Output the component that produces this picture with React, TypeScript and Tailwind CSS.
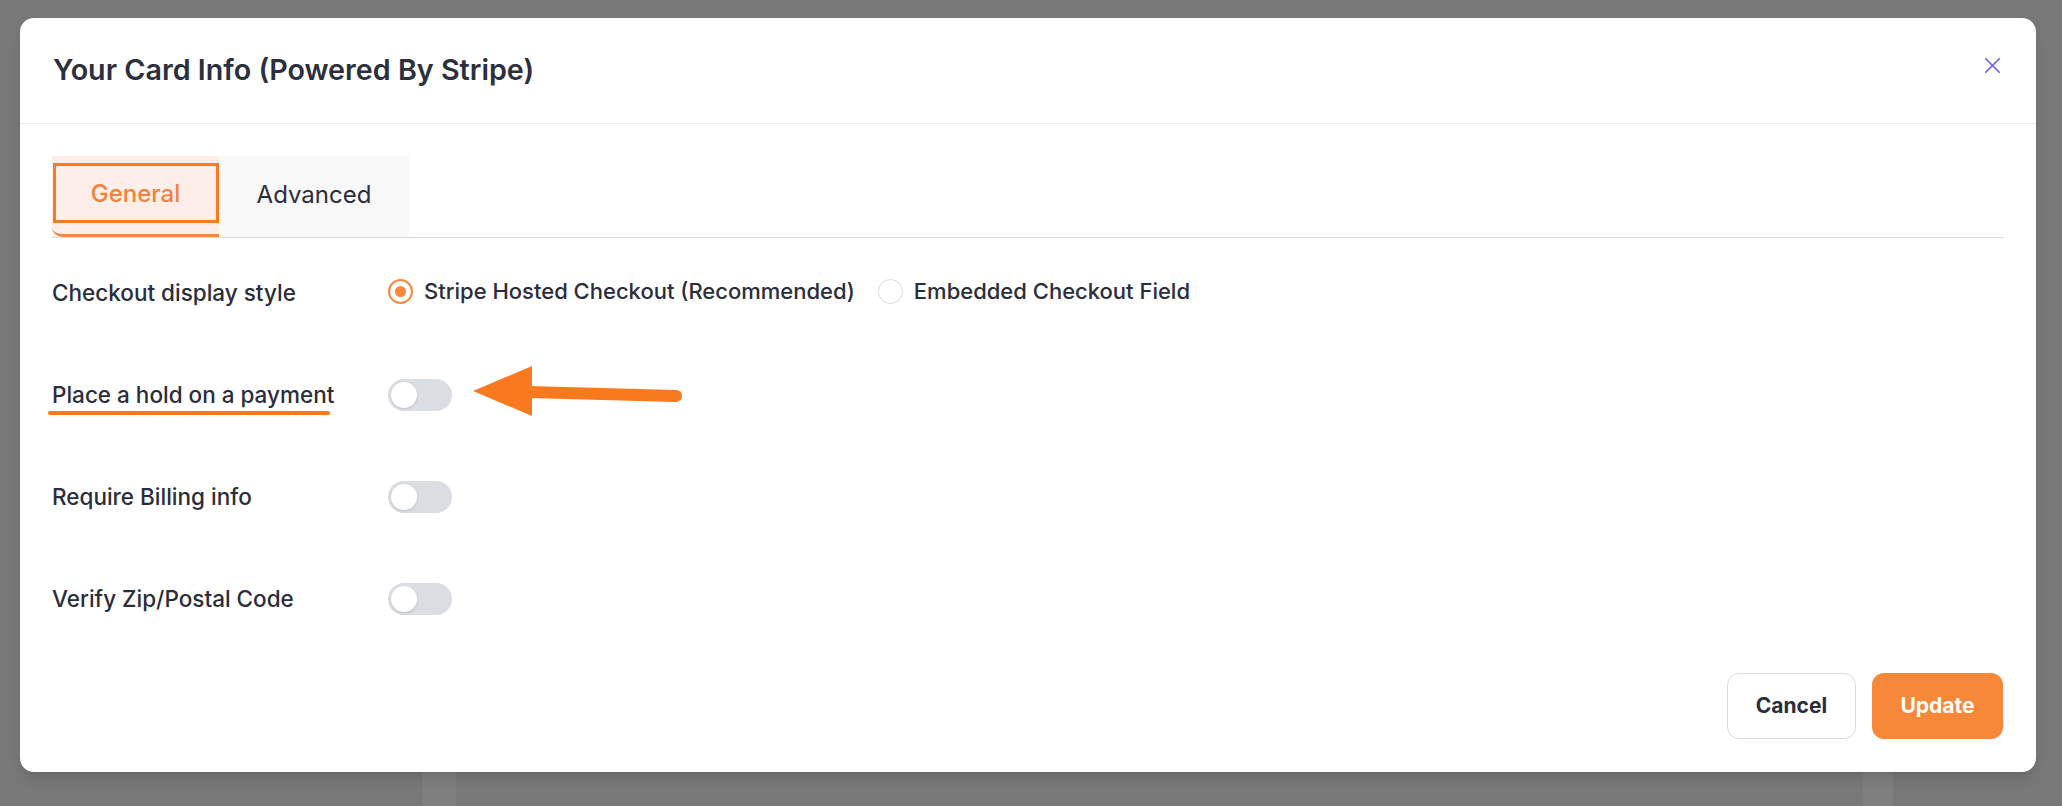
import { X } from "lucide-react";

const rows = ["Place a hold on a payment", "Require Billing info", "Verify Zip/Postal Code"];

function Toggle() {
  return (
    <div className="flex h-[32px] w-[64px] items-center rounded-full bg-[#dadde2] px-[3px]">
      <div className="h-[26px] w-[26px] rounded-full bg-white shadow-sm" />
    </div>
  );
}

function Radio({ checked, label }: { checked?: boolean; label: string }) {
  return (
    <label className="flex items-center gap-[11px]">
      {checked ? (
        <span className="flex h-[25px] w-[25px] items-center justify-center rounded-full border-2 border-[#f5883a]">
          <span className="h-[11px] w-[11px] rounded-full bg-[#f5883a]" />
        </span>
      ) : (
        <span className="h-[25px] w-[25px] rounded-full border border-[#dcdcdc] bg-white" />
      )}
      <span>{label}</span>
    </label>
  );
}

export default function App() {
  return (
    <div
      className="relative h-[806px] w-[2062px] overflow-hidden bg-[#787878]"
      style={{ fontFamily: "Inter, 'Noto Sans', sans-serif" }}
    >
      {/* page behind the overlay, only its lower edge shows */}
      <div className="flex h-full flex-col">
        <div className="flex-1" />
        <div className="flex h-[34px]">
          <div className="w-[422px]" />
          <div className="w-[34px] bg-[#7f7f7f]" />
          <div className="flex-1 bg-[#797979]" />
          <div className="w-[30px] bg-[#7f7f7f]" />
          <div className="w-[169px]" />
        </div>
      </div>

      <div className="absolute left-[20px] top-[18px] flex h-[754px] w-[2016px] flex-col rounded-[14px] bg-white text-[#2a2d3b] shadow-lg">
        <div className="flex h-[106px] shrink-0 items-start justify-between border-b border-[#ececec] pl-[33px] pr-[30px]">
          <h1 className="mt-[33px] text-[28.7px] font-semibold leading-[38px] text-[#2c2f3e]">
            Your Card Info (Powered By Stripe)
          </h1>
          <button className="mt-[34px] text-[#6a5ae0]">
            <X className="h-[27px] w-[27px]" strokeWidth={1.4} />
          </button>
        </div>

        <div className="flex flex-1 flex-col px-[32px]">
          <div className="mt-[32px] flex border-b border-[#dcdcdc]">
            <div className="flex bg-[#f9f9f9]">
              <button className="relative flex h-[81px] w-[167px] items-center justify-center rounded-bl-[10px] border-b-[3px] border-[#ef8a4c] bg-[#fdeee9] text-[24px] font-medium text-[#f0823a]">
                <span className="absolute bottom-[11px] left-[1px] right-0 top-[7px] border-[3px] border-[#fb7a1d]" />
                <span className="relative -mt-[3px]">General</span>
              </button>
              <button className="flex h-[81px] w-[190px] items-center justify-center pb-[3px] text-[24px] text-[#2a2d3b]">
                Advanced
              </button>
            </div>
          </div>

          <div className="mt-[4px] flex h-[102px] items-center text-[22.5px] font-medium leading-[30px]">
            <div className="w-[336px]">Checkout display style</div>
            <div className="-mt-[4px] flex items-center gap-[23px] text-[22px]">
              <Radio checked label="Stripe Hosted Checkout (Recommended)" />
              <Radio label="Embedded Checkout Field" />
            </div>
          </div>

          {rows.map((label, i) => (
            <div
              key={label}
              className="relative flex h-[102px] items-center text-[22.5px] font-medium leading-[30px]"
            >
              <div className="relative w-[336px]">
                {label}
                {i === 0 && (
                  <span className="absolute -bottom-[5px] -left-[4px] h-[4px] w-[282px] rounded-full bg-[#f97a1e]" />
                )}
              </div>
              <Toggle />
              {i === 0 && (
                <svg className="absolute left-[421px] top-[22px]" width="220" height="52" viewBox="0 0 220 52">
                  <path d="M0 25 L59 0 L59 50 Z" fill="#f97a1e" />
                  <path d="M55 26 L203 30" stroke="#f97a1e" strokeWidth="12" strokeLinecap="round" />
                </svg>
              )}
            </div>
          ))}

          <div className="mt-auto mb-[33px] flex justify-end gap-[16px] pr-[1px]">
            <button className="h-[66px] w-[129px] rounded-[12px] border border-[#dcdcdc] bg-white text-[21px] font-bold text-[#2a2d3b]">
              Cancel
            </button>
            <button className="h-[66px] w-[131px] rounded-[12px] bg-[#f7883a] text-[21px] font-bold text-white">
              Update
            </button>
          </div>
        </div>
      </div>
    </div>
  );
}
